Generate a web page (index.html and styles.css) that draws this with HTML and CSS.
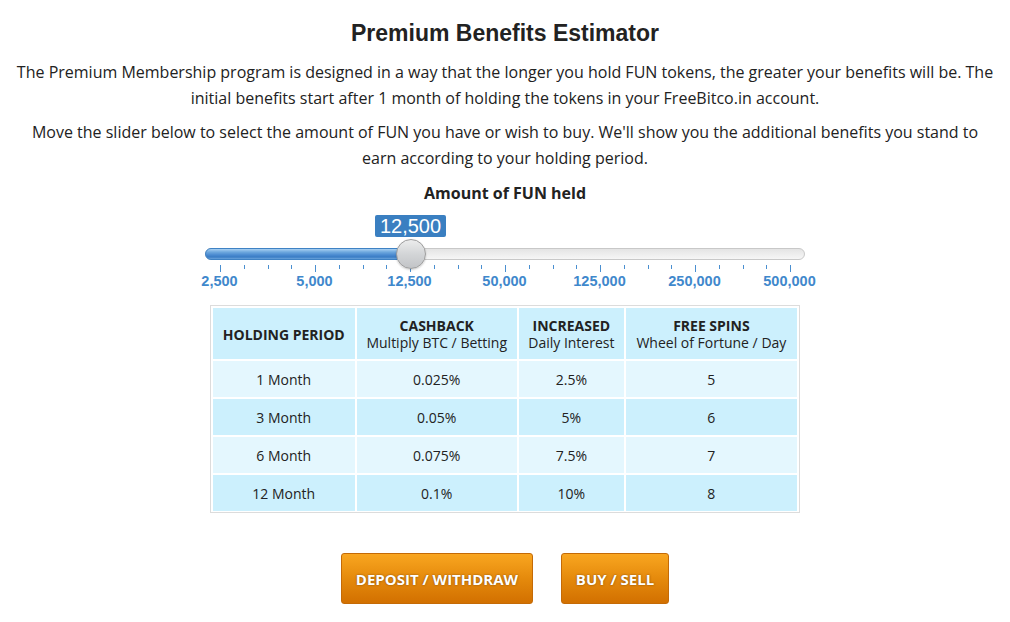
FILE: index.html
```html
<!DOCTYPE html>
<html lang="en">
<head>
    <meta charset="UTF-8">
    <title>Premium Benefits Estimator</title>
    <link rel="stylesheet" href="styles.css">
</head>
<body>
    <div class="container">
        <h1>Premium Benefits Estimator</h1>
        <p>The Premium Membership program is designed in a way that the longer you hold FUN tokens, the greater your benefits will be. The initial benefits start after 1 month of holding the tokens in your FreeBitco.in account.</p>
        <p>Move the slider below to select the amount of FUN you have or wish to buy. We'll show you the additional benefits you stand to earn according to your holding period.</p>

        <div class="amount-title">Amount of FUN held</div>

        <div class="slider">
            <div class="slider-bubble">12,500</div>
            <div class="slider-track">
                <div class="slider-fill" style="width: 205px;"></div>
                <div class="slider-handle" style="left: 190px;"></div>
            </div>
            <div class="slider-ticks">
                <span class="tick major"></span><span class="tick"></span><span class="tick"></span><span class="tick"></span>
                <span class="tick major"></span><span class="tick"></span><span class="tick"></span><span class="tick"></span>
                <span class="tick major"></span><span class="tick"></span><span class="tick"></span><span class="tick"></span>
                <span class="tick major"></span><span class="tick"></span><span class="tick"></span><span class="tick"></span>
                <span class="tick major"></span><span class="tick"></span><span class="tick"></span><span class="tick"></span>
                <span class="tick major"></span><span class="tick"></span><span class="tick"></span><span class="tick"></span>
                <span class="tick major"></span>
            </div>
            <div class="slider-labels">
                <span>2,500</span>
                <span>5,000</span>
                <span>12,500</span>
                <span>50,000</span>
                <span>125,000</span>
                <span>250,000</span>
                <span>500,000</span>
            </div>
        </div>

        <div class="table-wrap">
            <table class="benefits">
                <thead>
                    <tr>
                        <th class="col-period"><b>HOLDING PERIOD</b></th>
                        <th class="col-cashback"><b>CASHBACK</b><br>Multiply BTC / Betting</th>
                        <th class="col-interest"><b>INCREASED</b><br>Daily Interest</th>
                        <th class="col-spins"><b>FREE SPINS</b><br>Wheel of Fortune / Day</th>
                    </tr>
                </thead>
                <tbody>
                    <tr><td>1 Month</td><td>0.025%</td><td>2.5%</td><td>5</td></tr>
                    <tr><td>3 Month</td><td>0.05%</td><td>5%</td><td>6</td></tr>
                    <tr><td>6 Month</td><td>0.075%</td><td>7.5%</td><td>7</td></tr>
                    <tr><td>12 Month</td><td>0.1%</td><td>10%</td><td>8</td></tr>
                </tbody>
            </table>
        </div>

        <div class="buttons">
            <button class="btn btn-deposit">DEPOSIT / WITHDRAW</button>
            <button class="btn btn-buy">BUY / SELL</button>
        </div>
    </div>
</body>
</html>
```

FILE: styles.css
```css
body {
    margin: 0;
    background: #fff;
    font-family: "Open Sans", Arial, sans-serif;
    color: #222;
}
.container {
    width: 980px;
    margin: 0 auto;
    padding-top: 18px;
    text-align: center;
}
h1 {
    font-family: "Liberation Sans", Arial, sans-serif;
    font-size: 23px;
    font-weight: bold;
    color: #222;
    margin: 0 0 11px;
    line-height: 30px;
}
p {
    font-size: 16px;
    line-height: 26px;
    margin: 0 0 8px;
}
.amount-title {
    font-size: 16px;
    font-weight: bold;
    line-height: 20px;
    margin-top: 12px;
}

/* slider */
.slider {
    width: 600px;
    margin: 12px auto 0;
}
.slider-bubble {
    width: 71px;
    height: 22px;
    margin-left: 170px;
    background: #3a7fc1;
    border-radius: 2px;
    color: #fff;
    font-family: "Liberation Sans", Arial, sans-serif;
    font-size: 20px;
    line-height: 22px;
    text-align: center;
}
.slider-track {
    position: relative;
    height: 10px;
    margin-top: 11px;
    background: linear-gradient(#e4e4e4, #f6f6f6);
    border: 1px solid #c8c8c8;
    border-radius: 6px;
}
.slider-fill {
    height: 10px;
    margin: -1px 0 0 -1px;
    border: 1px solid #3f82c4;
    border-radius: 6px 0 0 6px;
    background: linear-gradient(#a9d0f2 0%, #6ea8de 30%, #4a8ad0 60%, #3a7cc4 80%, #6aa3db 100%);
}
.slider-handle {
    position: absolute;
    top: -10px;
    width: 28px;
    height: 28px;
    border-radius: 50%;
    border: 1px solid #9d9d9d;
    background: linear-gradient(#eceded, #d3d5d7 50%, #c2c4c7);
    box-shadow: 0 1px 2px rgba(0,0,0,0.2);
}
.slider-ticks {
    display: flex;
    justify-content: space-between;
    align-items: flex-start;
    padding: 0 14px 0 15px;
    margin-top: 5px;
    height: 8px;
}
.tick {
    width: 1px;
    height: 4px;
    background: #4a8fd0;
}
.tick.major {
    height: 7px;
}
.slider-labels {
    display: grid;
    grid-template-columns: repeat(7, 95px);
    margin-left: -33px;
    font-family: "Liberation Sans", Arial, sans-serif;
    font-weight: bold;
    font-size: 14.5px;
    color: #3f88cc;
    line-height: 16px;
}

/* benefits table */
.table-wrap {
    width: 588px;
    margin: 16px auto 0;
    border: 1px solid #dcdcdc;
    padding-top: 1px;
}
.benefits {
    width: 100%;
    border-collapse: separate;
    border-spacing: 2px;
    margin: -1px 0 -1px;
    font-size: 14px;
    color: #222;
}
.benefits th {
    background: #ccf0fd;
    font-weight: normal;
    height: 50px;
    line-height: 17px;
    padding: 1px 0 0;
}
.benefits th b {
    font-weight: bold;
}
.benefits td {
    height: 36px;
    padding: 0;
}
.benefits tbody tr:nth-child(odd) td {
    background: #e4f7fe;
}
.benefits tbody tr:nth-child(even) td {
    background: #ccf0fd;
}
.col-period { width: 142px; }
.col-cashback { width: 161px; }
.col-interest { width: 105px; }
.col-spins { width: 172px; }

/* buttons */
.buttons {
    display: flex;
    justify-content: center;
    gap: 28px;
    margin-top: 40px;
}
.btn {
    height: 51px;
    border: 1px solid #c46a06;
    border-radius: 3px;
    background: linear-gradient(#f9a620, #e58a0c 50%, #d27000);
    color: #fff;
    font-family: "Open Sans", Arial, sans-serif;
    font-weight: bold;
    font-size: 15px;
    text-shadow: 0 0 2px rgba(80,40,0,0.7);
    cursor: pointer;
}
.btn-deposit { width: 192px; }
.btn-buy { width: 108px; }
```
